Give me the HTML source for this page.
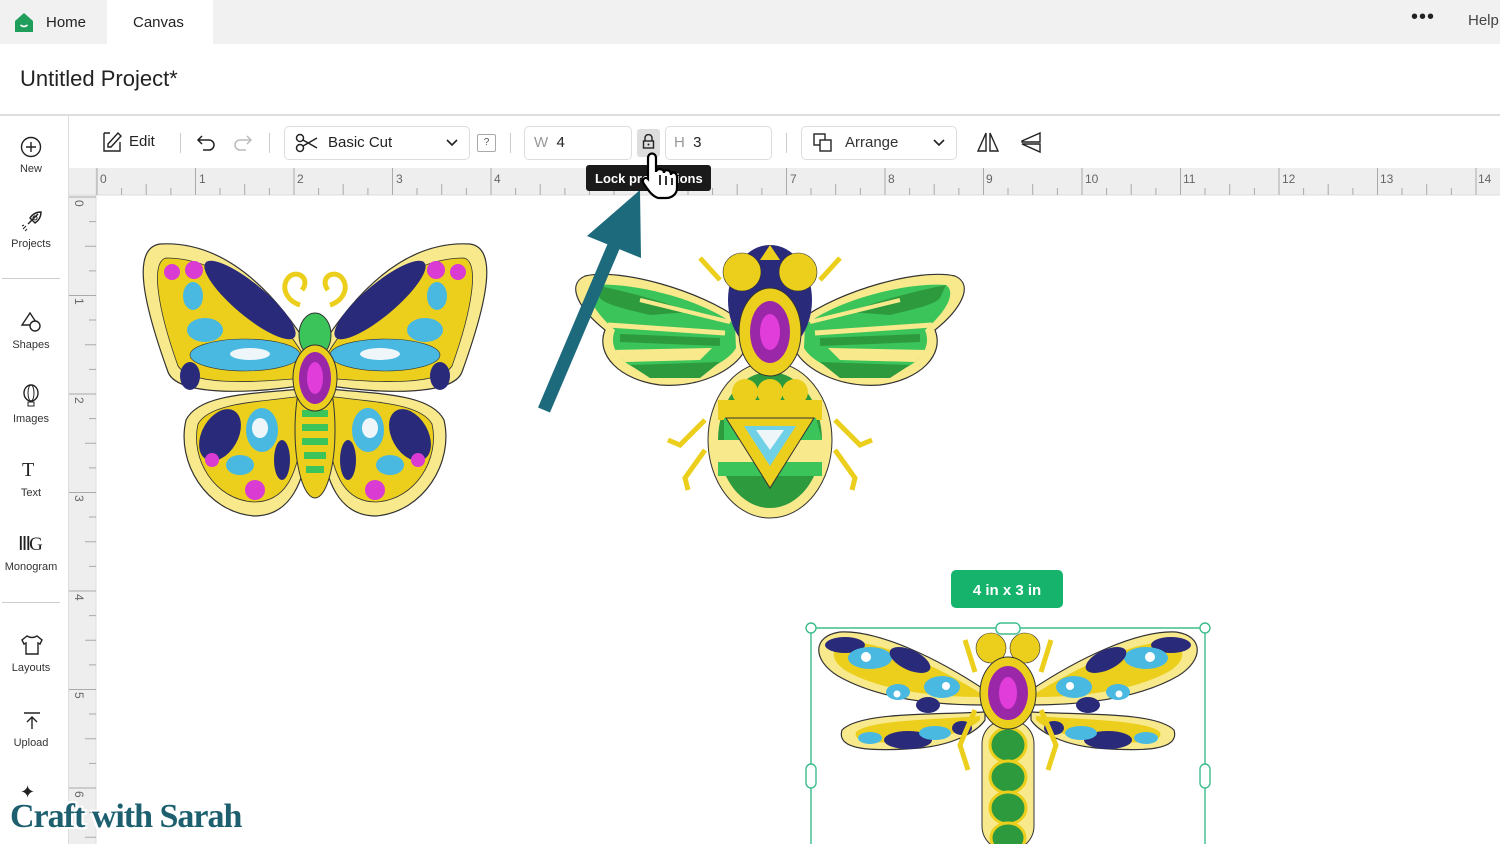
<!DOCTYPE html>
<html><head><style>
*{margin:0;padding:0;box-sizing:border-box}
body{width:1500px;height:844px;overflow:hidden;background:#fff;font-family:"Liberation Sans",sans-serif;position:relative;color:#222}
.a{position:absolute}
.top{left:0;top:0;width:1500px;height:44px;background:#f1f1f1}
.tab{left:107px;top:0;width:106px;height:44px;background:#fff}
.box{border:1px solid #ddd;border-radius:5px;background:#fff}
.sb{font-size:11px;color:#333;text-align:center;width:62px;left:0}
.sep{width:1px;height:20px;background:#ccc;top:133px}
</style></head><body>
<div class="a top"></div><div class="a tab"></div>
<svg class="a" style="left:14px;top:12px" width="20" height="21" viewBox="0 0 20 21"><path d="M10 1 L19 9 L19 20 L1 20 L1 9 Z" fill="#1f9e5b"/><path d="M6.5 13 Q10 16 13.5 13" stroke="#fff" stroke-width="1.6" fill="none"/></svg>
<div class="a" style="left:46px;top:14px;font-size:15px">Home</div>
<div class="a" style="left:133px;top:14px;font-size:15px">Canvas</div>
<div class="a" style="left:1411px;top:6px;font-size:20px;letter-spacing:1px">•••</div>
<div class="a" style="left:1468px;top:12px;font-size:15px;color:#444">Help</div>
<div class="a" style="left:20px;top:66px;font-size:22px;color:#222">Untitled Project*</div>
<div class="a" style="left:0;top:114px;width:1500px;height:2px;background:#ddd"></div>
<div class="a" style="left:68px;top:116px;width:1px;height:728px;background:#ddd"></div>
<svg class="a" style="left:20px;top:136px" width="22" height="22"><circle cx="11" cy="11" r="9.5" fill="none" stroke="#222" stroke-width="1.4"/><path d="M11 6v10M6 11h10" stroke="#222" stroke-width="1.4"/></svg>
<div class="a sb" style="top:163px">New</div>
<svg class="a" style="left:20px;top:209px" width="24" height="24"><path d="M8 15 L18 5 M10 9 Q14 3 21 3 Q21 10 15 14 Z" fill="none" stroke="#222" stroke-width="1.4"/><circle cx="15" cy="9" r="2" fill="none" stroke="#222"/><path d="M3 20l3-3M5 22l2-2M2 17l2-1" stroke="#222"/></svg>
<div class="a sb" style="top:238px">Projects</div>
<div class="a" style="left:2px;top:278px;width:58px;height:1px;background:#ccc"></div>
<svg class="a" style="left:20px;top:310px" width="24" height="24"><path d="M10 3 L2 15 L18 15 Z" fill="none" stroke="#222" stroke-width="1.4"/><circle cx="15" cy="16" r="5" fill="#fff" stroke="#222" stroke-width="1.4"/></svg>
<div class="a sb" style="top:339px">Shapes</div>
<svg class="a" style="left:22px;top:384px" width="20" height="24"><ellipse cx="9" cy="9" rx="7" ry="8" fill="none" stroke="#222" stroke-width="1.4"/><ellipse cx="9" cy="9" rx="3" ry="8" fill="none" stroke="#222"/><rect x="6" y="18" width="6" height="4" fill="none" stroke="#222"/></svg>
<div class="a sb" style="top:413px">Images</div>
<div class="a" style="left:22px;top:459px;font-size:20px;font-family:'Liberation Serif',serif">T</div>
<div class="a sb" style="top:487px">Text</div>
<div class="a" style="left:18px;top:533px;font-size:19px;font-family:'Liberation Serif',serif;letter-spacing:-2px">ⅢG</div>
<div class="a sb" style="top:561px">Monogram</div>
<div class="a" style="left:2px;top:602px;width:58px;height:1px;background:#ccc"></div>
<svg class="a" style="left:20px;top:634px" width="24" height="22"><path d="M7 2 L2 6 L4 10 L6 9 L6 20 L18 20 L18 9 L20 10 L22 6 L17 2 Q12 5 7 2Z" fill="none" stroke="#222" stroke-width="1.4"/></svg>
<div class="a sb" style="top:662px">Layouts</div>
<svg class="a" style="left:22px;top:711px" width="20" height="20"><path d="M2 2h16M10 18V6M5 11l5-5 5 5" fill="none" stroke="#222" stroke-width="1.4"/></svg>
<div class="a sb" style="top:737px">Upload</div>
<div class="a" style="left:20px;top:782px;font-size:18px">✦</div>
<svg class="a" style="left:100px;top:130px" width="24" height="24"><path d="M4 3h6M4 3v18h16V12" fill="none" stroke="#222" stroke-width="1.4"/><path d="M8 14 L18 3 L21 6 L11 17 L8 17Z" fill="none" stroke="#222" stroke-width="1.4"/></svg>
<div class="a" style="left:129px;top:133px;font-size:15px">Edit</div>
<div class="a sep" style="left:180px"></div>
<svg class="a" style="left:196px;top:132px" width="22" height="20"><path d="M6 4 L2 8 L6 12 M2 8 H13 A5 5 0 0 1 13 18 H7" fill="none" stroke="#222" stroke-width="1.5"/></svg>
<svg class="a" style="left:231px;top:132px" width="22" height="20"><path d="M16 4 L20 8 L16 12 M20 8 H9 A5 5 0 0 0 9 18 H15" fill="none" stroke="#bbb" stroke-width="1.5"/></svg>
<div class="a sep" style="left:269px"></div>
<div class="a box" style="left:284px;top:126px;width:186px;height:34px"></div>
<svg class="a" style="left:295px;top:133px" width="24" height="20"><circle cx="5" cy="5" r="3.5" fill="none" stroke="#222" stroke-width="1.5"/><circle cx="5" cy="15" r="3.5" fill="none" stroke="#222" stroke-width="1.5"/><path d="M8 7 L22 15 M8 13 L22 5" stroke="#222" stroke-width="1.5"/></svg>
<div class="a" style="left:328px;top:134px;font-size:15px">Basic Cut</div>
<svg class="a" style="left:446px;top:138px" width="12" height="10"><path d="M1 2l5 5 5-5" fill="none" stroke="#222" stroke-width="1.6"/></svg>
<div class="a" style="left:477px;top:134px;width:19px;height:18px;border:1px solid #aaa;border-radius:2px;font-size:10px;text-align:center;line-height:16px;color:#555">?</div>
<div class="a sep" style="left:510px"></div>
<div class="a box" style="left:524px;top:126px;width:108px;height:34px"></div>
<div class="a" style="left:534px;top:134px;font-size:15px"><span style="color:#999">W</span>&nbsp;&nbsp;4</div>
<div class="a" style="left:637px;top:129px;width:23px;height:28px;background:#ddd;border-radius:3px"></div>
<svg class="a" style="left:642px;top:134px" width="13" height="16"><path d="M3 7V4a3.5 3.5 0 0 1 7 0v3" fill="none" stroke="#222" stroke-width="1.4"/><rect x="1.5" y="7" width="10" height="7" fill="none" stroke="#222" stroke-width="1.4"/><circle cx="6.5" cy="10.5" r="1" fill="#222"/></svg>
<div class="a box" style="left:665px;top:126px;width:107px;height:34px"></div>
<div class="a" style="left:674px;top:134px;font-size:15px"><span style="color:#999">H</span>&nbsp;&nbsp;3</div>
<div class="a sep" style="left:786px"></div>
<div class="a box" style="left:801px;top:126px;width:156px;height:34px"></div>
<svg class="a" style="left:812px;top:132px" width="22" height="22"><rect x="2" y="2" width="11" height="11" fill="none" stroke="#222" stroke-width="1.4"/><rect x="8" y="8" width="11" height="11" fill="#fff" stroke="#222" stroke-width="1.4"/></svg>
<div class="a" style="left:845px;top:134px;font-size:15px;color:#333">Arrange</div>
<svg class="a" style="left:933px;top:138px" width="12" height="10"><path d="M1 2l5 5 5-5" fill="none" stroke="#222" stroke-width="1.6"/></svg>
<svg class="a" style="left:976px;top:130px" width="24" height="24"><path d="M10 3 L2 21 H10Z M14 3 L22 21 H14Z" fill="none" stroke="#222" stroke-width="1.4"/></svg>
<svg class="a" style="left:1019px;top:131px" width="24" height="24"><path d="M21 2 L3 10 V11 L21 11Z M21 13 L3 13 L21 21Z" fill="none" stroke="#222" stroke-width="1.4"/></svg>
<svg class="a" style="left:69px;top:168px" width="1431" height="676">
<rect x="0" y="0" width="1431" height="27" fill="#eeeeee"/>
<rect x="0" y="0" width="27" height="676" fill="#eeeeee"/>
<line x1="0" y1="27" x2="1431" y2="27" stroke="#ddd"/>
<line x1="27" y1="0" x2="27" y2="676" stroke="#ddd"/>
<g stroke="#aaa">
<path d="M28 0v27M126.5 0v27M225 0v27M323.5 0v27M422 0v27M520.5 0v27M619 0v27M717.5 0v27M816 0v27M914.5 0v27M1013 0v27M1111.5 0v27M1210 0v27M1308.5 0v27M1407 0v27"/>
<path d="M52.6 20v7M77.2 16v11M101.9 20v7M151 20v7M175.7 16v11M200.4 20v7M249.6 20v7M274.2 16v11M298.9 20v7M348 20v7M372.7 16v11M397.4 20v7M446.6 20v7M471.2 16v11M495.9 20v7M545 20v7M569.7 16v11M594.4 20v7M643.6 20v7M668.2 16v11M692.9 20v7M742 20v7M766.7 16v11M791.4 20v7M840.6 20v7M865.2 16v11M889.9 20v7M939 20v7M963.7 16v11M988.4 20v7M1037.6 20v7M1062.2 16v11M1086.9 20v7M1136 20v7M1160.7 16v11M1185.4 20v7M1234.6 20v7M1259.2 16v11M1283.9 20v7M1333 20v7M1357.7 16v11M1382.4 20v7"/>
<path d="M0 29h27M0 127.5h27M0 226h27M0 324.5h27M0 423h27M0 521.5h27M0 620h27"/>
<path d="M20 53.6h7M16 78.2h11M20 102.9h7M20 152h7M16 176.7h11M20 201.4h7M20 250.6h7M16 275.2h11M20 299.9h7M20 349h7M16 373.7h11M20 398.4h7M20 447.6h7M16 472.2h11M20 496.9h7M20 546h7M16 570.7h11M20 595.4h7M20 644.6h7M16 669.2h11"/>
</g>
<g font-size="12" fill="#666" font-family="Liberation Sans">
<text x="31" y="15">0</text><text x="130" y="15">1</text><text x="228" y="15">2</text><text x="327" y="15">3</text><text x="425" y="15">4</text><text x="524" y="15">5</text><text x="622" y="15">6</text><text x="721" y="15">7</text><text x="819" y="15">8</text><text x="917" y="15">9</text><text x="1016" y="15">10</text><text x="1114" y="15">11</text><text x="1213" y="15">12</text><text x="1311" y="15">13</text><text x="1409" y="15">14</text>
<g transform="rotate(90)"><text x="32" y="-6">0</text><text x="130" y="-6">1</text><text x="229" y="-6">2</text><text x="327" y="-6">3</text><text x="426" y="-6">4</text><text x="524" y="-6">5</text><text x="623" y="-6">6</text></g>
</g>
</svg>
<svg class="a" style="left:0;top:0" width="1500" height="844">
<defs>
<g id="bwing">
<path d="M312 352 C280 300 230 240 160 244 C132 248 142 300 168 372 C176 394 240 396 312 384 Z" fill="#f8ea8c" stroke="#333" stroke-width="1.2"/>
<path d="M304 356 C276 310 226 258 166 258 C150 262 158 310 178 366 C190 384 240 384 304 378 Z" fill="#ebcf1c" stroke="#333" stroke-width=".8"/>
<ellipse cx="250" cy="300" rx="58" ry="16" transform="rotate(40 250 300)" fill="#2a2a7a"/>
<ellipse cx="245" cy="355" rx="55" ry="16" fill="#49b9e2" stroke="#333" stroke-width=".6"/>
<ellipse cx="250" cy="354" rx="20" ry="6" fill="#eef6fa"/>
<ellipse cx="205" cy="330" rx="18" ry="12" fill="#49b9e2"/>
<ellipse cx="194" cy="270" rx="9" ry="9" fill="#d93bd3"/>
<circle cx="172" cy="272" r="8" fill="#d93bd3"/>
<ellipse cx="193" cy="296" rx="10" ry="14" fill="#49b9e2"/>
<ellipse cx="190" cy="376" rx="10" ry="14" fill="#2a2a7a"/>
<path d="M310 388 C260 394 200 392 186 420 C176 462 206 512 254 516 C292 516 304 480 310 440 Z" fill="#f8ea8c" stroke="#333" stroke-width="1.2"/>
<path d="M302 396 C262 402 210 402 198 424 C190 458 214 500 254 502 C286 502 296 474 302 440 Z" fill="#ebcf1c" stroke="#333" stroke-width=".8"/>
<ellipse cx="220" cy="435" rx="18" ry="28" transform="rotate(30 220 435)" fill="#2a2a7a"/>
<ellipse cx="262" cy="430" rx="16" ry="22" fill="#49b9e2"/>
<ellipse cx="260" cy="428" rx="8" ry="10" fill="#eef6fa"/>
<ellipse cx="240" cy="465" rx="14" ry="10" fill="#49b9e2"/>
<ellipse cx="282" cy="460" rx="8" ry="20" fill="#2a2a7a"/>
<circle cx="255" cy="490" r="10" fill="#d93bd3"/>
<circle cx="212" cy="460" r="7" fill="#d93bd3"/>
<path d="M300 305 C285 300 280 285 290 276 C300 270 310 280 302 290" fill="none" stroke="#ebcf1c" stroke-width="5"/>
</g>
<g id="bewing">
<path d="M740 320 C700 290 620 268 585 276 C565 285 580 310 605 330 C595 355 620 380 660 385 C700 388 735 370 745 350 Z" fill="#f8ea8c" stroke="#333" stroke-width="1.2"/>
<path d="M735 325 C700 298 630 282 594 285 C584 292 592 310 615 330 C606 352 628 372 662 375 C700 377 728 362 736 348 Z" fill="#3bc45a"/>
<path d="M594 285 C620 290 660 300 690 312 L650 315 C630 310 605 305 600 298Z" fill="#2e9a3e"/>
<path d="M612 350 L712 348 L700 360 L625 362Z" fill="#f8ea8c"/>
<path d="M630 365 L720 362 L700 378 L650 378Z" fill="#2e9a3e"/>
<path d="M608 325 L725 333" stroke="#f8ea8c" stroke-width="5"/>
<path d="M640 300 L730 322" stroke="#f8ea8c" stroke-width="4"/>
<path d="M620 338 L720 342" stroke="#2e9a3e" stroke-width="8"/>
</g>
<g id="dwing">
<path d="M985 690 C940 660 880 630 840 632 C812 636 812 660 838 676 C880 700 940 705 985 705 Z" fill="#f8ea8c" stroke="#333" stroke-width="1.2"/>
<path d="M980 693 C940 668 885 642 848 642 C828 646 830 662 848 672 C885 692 940 697 980 697 Z" fill="#ebcf1c"/>
<ellipse cx="845" cy="645" rx="20" ry="8" fill="#2a2a7a"/>
<ellipse cx="870" cy="658" rx="22" ry="11" fill="#49b9e2"/><circle cx="866" cy="657" r="5" fill="#fff"/>
<ellipse cx="910" cy="660" rx="22" ry="10" transform="rotate(25 910 660)" fill="#2a2a7a"/>
<ellipse cx="898" cy="692" rx="12" ry="8" fill="#49b9e2"/><circle cx="897" cy="694" r="3.5" fill="#fff"/>
<ellipse cx="942" cy="687" rx="18" ry="11" fill="#49b9e2"/><circle cx="946" cy="686" r="4" fill="#fff"/>
<ellipse cx="928" cy="705" rx="12" ry="8" fill="#2a2a7a"/>
<path d="M985 712 C930 715 860 712 842 730 C836 750 870 752 920 748 C960 744 980 728 985 720Z" fill="#f8ea8c" stroke="#333" stroke-width="1.2"/>
<path d="M980 716 C930 720 870 720 856 732 C852 744 880 744 920 740 C956 736 974 726 980 720Z" fill="#ebcf1c"/>
<ellipse cx="908" cy="740" rx="24" ry="9" fill="#2a2a7a"/>
<ellipse cx="870" cy="738" rx="12" ry="6" fill="#49b9e2"/>
<ellipse cx="935" cy="733" rx="16" ry="7" fill="#49b9e2"/>
<ellipse cx="962" cy="728" rx="10" ry="7" fill="#2a2a7a"/>
</g>
</defs>
<use href="#bwing"/><use href="#bwing" transform="translate(630,0) scale(-1,1)"/>
<ellipse cx="315" cy="335" rx="16" ry="22" fill="#3bc45a" stroke="#333"/>
<ellipse cx="315" cy="430" rx="20" ry="68" fill="#ebcf1c" stroke="#333"/>
<g fill="#3bc45a"><rect x="302" y="410" width="26" height="7"/><rect x="302" y="424" width="26" height="7"/><rect x="302" y="438" width="26" height="7"/><rect x="304" y="452" width="22" height="7"/><rect x="306" y="466" width="18" height="7"/></g>
<ellipse cx="315" cy="378" rx="22" ry="33" fill="#ebcf1c" stroke="#333"/>
<ellipse cx="315" cy="378" rx="16" ry="26" fill="#9a27a8"/>
<ellipse cx="315" cy="378" rx="8" ry="16" fill="#e03ddb"/>
<use href="#bewing"/><use href="#bewing" transform="translate(1540,0) scale(-1,1)"/>
<path d="M705 420 L680 445 L668 440 M705 450 L685 478 L688 490 M835 420 L860 445 L872 440 M835 450 L855 478 L852 490 M720 280 L700 258 M820 280 L840 258" stroke="#ebcf1c" stroke-width="5" fill="none"/>
<ellipse cx="770" cy="440" rx="62" ry="78" fill="#f8ea8c" stroke="#333"/>
<ellipse cx="770" cy="440" rx="52" ry="68" fill="#2e9a3e"/>
<rect x="718" y="400" width="104" height="20" fill="#ebcf1c"/>
<rect x="718" y="440" width="104" height="22" fill="#f8ea8c"/>
<rect x="718" y="462" width="104" height="14" fill="#3bc45a"/>
<path d="M724 418 L816 418 L822 440 L724 440Z" fill="#3bc45a"/>
<circle cx="745" cy="392" r="13" fill="#ebcf1c"/><circle cx="770" cy="392" r="13" fill="#ebcf1c"/><circle cx="795" cy="392" r="13" fill="#ebcf1c"/>
<path d="M726 418 L814 418 L770 488Z" fill="#ebcf1c" stroke="#333"/>
<path d="M744 426 L796 426 L770 466Z" fill="#6fd0e6"/>
<path d="M756 430 L784 430 L770 450Z" fill="#eef6fa"/>
<ellipse cx="770" cy="300" rx="42" ry="55" fill="#2a2a7a"/>
<path d="M770 245 L760 260 L780 260Z" fill="#ebcf1c"/>
<circle cx="742" cy="272" r="19" fill="#ebcf1c" stroke="#333" stroke-width=".6"/><circle cx="798" cy="272" r="19" fill="#ebcf1c" stroke="#333" stroke-width=".6"/>
<ellipse cx="770" cy="332" rx="31" ry="44" fill="#ebcf1c" stroke="#333"/>
<ellipse cx="770" cy="332" rx="20" ry="31" fill="#9a27a8"/>
<ellipse cx="770" cy="332" rx="10" ry="18" fill="#e03ddb"/>
<use href="#dwing"/><use href="#dwing" transform="translate(2016,0) scale(-1,1)"/>
<path d="M975 710 L960 745 L968 770 M1041 710 L1056 745 L1048 770 M975 672 L965 640 M1041 672 L1051 640" stroke="#ebcf1c" stroke-width="5" fill="none"/>
<rect x="982" y="720" width="52" height="130" rx="24" fill="#f8ea8c" stroke="#333"/>
<g fill="#2e9a3e" stroke="#ebcf1c" stroke-width="3"><ellipse cx="1008" cy="745" rx="18" ry="17"/><ellipse cx="1008" cy="777" rx="18" ry="16"/><ellipse cx="1008" cy="808" rx="18" ry="16"/><ellipse cx="1008" cy="838" rx="17" ry="15"/></g>
<circle cx="991" cy="648" r="15" fill="#ebcf1c" stroke="#333" stroke-width=".6"/><circle cx="1025" cy="648" r="15" fill="#ebcf1c" stroke="#333" stroke-width=".6"/>
<ellipse cx="1008" cy="693" rx="28" ry="36" fill="#ebcf1c" stroke="#333"/>
<ellipse cx="1008" cy="693" rx="20" ry="27" fill="#9a27a8"/>
<ellipse cx="1008" cy="693" rx="9" ry="16" fill="#e03ddb"/>
<g stroke="#3dbd8c" stroke-width="1.4" fill="#fff">
<path d="M811 628 H1205 M811 628 V844 M1205 628 V844" fill="none"/>
<circle cx="811" cy="628" r="5"/><circle cx="1205" cy="628" r="5"/>
<rect x="996" y="623" width="24" height="11" rx="5"/>
<rect x="806" y="764" width="10" height="24" rx="5"/><rect x="1200" y="764" width="10" height="24" rx="5"/>
</g>
<rect x="951" y="570" width="112" height="38" rx="5" fill="#16b36d"/>
<text x="1007" y="595" font-size="15" font-weight="bold" fill="#fff" text-anchor="middle" font-family="Liberation Sans">4 in x 3 in</text>
<line x1="544" y1="410" x2="618" y2="236" stroke="#1d6a7c" stroke-width="13"/>
<path d="M640 190 L587 236 L641 258Z" fill="#1d6a7c"/>
<rect x="586" y="165" width="125" height="26" rx="3" fill="#1a1a1a"/>
<text x="595" y="183" font-size="13" font-weight="bold" fill="#fff" font-family="Liberation Sans">Lock pro</text>
<text x="676" y="183" font-size="13" font-weight="bold" fill="#fff" font-family="Liberation Sans">ions</text>
<path d="M648 158 C648 152 656 152 656 158 L656 172 C656 168 664 168 664 173 C664 169 671 169 671 175 C671 171 677 172 677 177 L677 188 C677 194 672 198 666 198 L658 198 C652 196 648 190 644 184 C641 180 645 176 648 179 Z" fill="#fff" stroke="#000" stroke-width="2.2"/>
<path d="M660 175v10M666 176v9M672 178v7" stroke="#000" stroke-width="1.6"/>
</svg>
<div class="a" style="left:10px;top:798px;font-family:'Liberation Serif',serif;font-weight:bold;font-size:34px;color:#1d5f6e;letter-spacing:-1px;text-shadow:-2px -2px 0 #fff,2px -2px 0 #fff,-2px 2px 0 #fff,2px 2px 0 #fff">Craft with Sarah</div>
</body></html>
